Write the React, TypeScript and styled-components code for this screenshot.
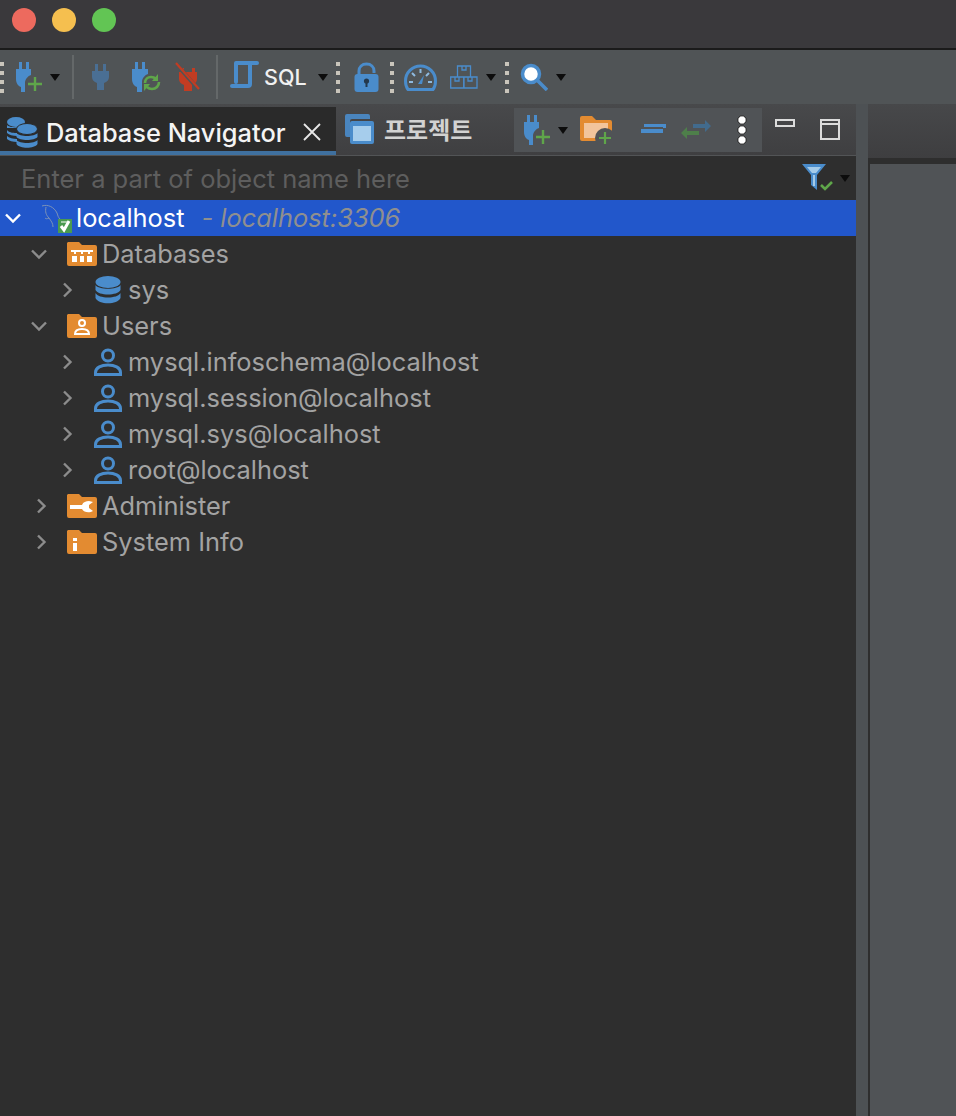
import React from "react";
import styled, { createGlobalStyle } from "styled-components";

const GlobalStyle = createGlobalStyle`
  html, body {
    margin: 0;
    padding: 0;
    background: #2e2e2e;
  }
  * {
    box-sizing: border-box;
  }
`;

const Window = styled.div`
  width: 956px;
  height: 1116px;
  display: flex;
  flex-direction: column;
  overflow: hidden;
  font-family: Inter, "Noto Sans CJK KR", sans-serif;
`;

const TitleBar = styled.div`
  height: 50px;
  flex: none;
  padding: 8px 0 0 12px;
  display: flex;
  gap: 16px;
  background: #3a393c;
  border-bottom: 2px solid #1b1b1b;
`;

const Light = styled.span<{ $color: string }>`
  width: 24px;
  height: 24px;
  border-radius: 50%;
  background: ${(p) => p.$color};
`;

const Toolbar = styled.div`
  height: 54px;
  flex: none;
  display: flex;
  align-items: center;
  background: #505456;
  color: #f0f0f0;
  font-size: 21.5px;
  font-weight: 500;
`;

const Slot = styled.div<{ $left: number }>`
  display: flex;
  align-items: center;
  flex: none;
  margin-left: ${(p) => p.$left}px;
`;

const Grip = styled.span`
  display: block;
  width: 4px;
  height: 31px;
  background: repeating-linear-gradient(#c9c5bb 0 4px, transparent 4px 9px);
`;

const Separator = styled.span`
  display: block;
  width: 2px;
  height: 44px;
  background: #646869;
`;

const Arrow = styled.span`
  display: block;
  flex: none;
  width: 0;
  height: 0;
  border-left: 5px solid transparent;
  border-right: 5px solid transparent;
  border-top: 7px solid #0c0c0c;
`;

const Workspace = styled.div`
  flex: 1;
  display: flex;
  min-height: 0;
`;

const NavigatorPanel = styled.section`
  width: 856px;
  flex: none;
  display: flex;
  flex-direction: column;
  background: #2e2e2e;
`;

const TabBar = styled.div`
  height: 52px;
  flex: none;
  display: flex;
  background: linear-gradient(#48494b, #3f3f41);
  border-bottom: 1px solid #525456;
`;

const ActiveTab = styled.div`
  width: 336px;
  flex: none;
  display: flex;
  align-items: center;
  margin-top: 3px;
  padding: 6px 0 0 7px;
  background: #2a2a2a;
  border-bottom: 4px solid #3f709f;
  color: #f4f4f4;
  font-size: 25.4px;
  font-weight: 500;
`;

const TabLabel = styled.span`
  margin-left: 8px;
  white-space: nowrap;
`;

const CloseIcon = styled.svg`
  margin-left: 16px;
  flex: none;
`;

const InactiveTab = styled.div`
  width: 178px;
  flex: none;
  display: flex;
  align-items: center;
  margin-top: 3px;
  padding: 0 0 5px 9px;
  color: #d2d2d2;
  font-size: 24px;
  font-weight: 700;
  font-family: "Noto Sans CJK KR", sans-serif;
`;

const ProjectLabel = styled.span`
  margin-left: 10px;
`;

const ViewBar = styled.div`
  width: 248px;
  height: 44px;
  margin-top: 4px;
  flex: none;
  display: flex;
  align-items: center;
  background: #505356;
`;

const WindowControls = styled.div`
  display: flex;
  align-items: flex-start;
  padding: 15px 0 0 13px;
  gap: 25px;
`;

const FilterRow = styled.div`
  height: 44px;
  flex: none;
  display: flex;
  align-items: center;
  padding: 0 6px 0 21px;
  font-size: 25.5px;
  color: #5e5e5e;
`;

const Placeholder = styled.span`
  flex: 1;
  white-space: nowrap;
`;

const Tree = styled.div`
  display: flex;
  flex-direction: column;
`;

const Row = styled.div<{ $level: number; $selected?: boolean }>`
  height: 36px;
  display: flex;
  align-items: center;
  padding: 0 0 2px ${(p) => 3 + p.$level * 26}px;
  background: ${(p) => (p.$selected ? "#2257cb" : "transparent")};
  color: ${(p) => (p.$selected ? "#ffffff" : "#a3a3a3")};
  font-size: 25.4px;
  white-space: nowrap;
`;

const Twisty = styled.span`
  width: 20px;
  flex: none;
  margin-top: 2px;
  display: flex;
  justify-content: center;
`;

const NodeIcon = styled.span`
  width: 53px;
  flex: none;
  margin-top: 2px;
  padding-left: 18px;
  display: flex;
  align-items: center;
`;

const Hint = styled.span`
  margin-left: 17px;
  color: #8f8f8f;
  font-style: italic;
`;

const Sash = styled.div`
  width: 12px;
  flex: none;
  background: #4d5154;
`;

const EditorArea = styled.section`
  flex: 1;
  display: flex;
  flex-direction: column;
`;

const EditorHeader = styled.div`
  height: 54px;
  flex: none;
  background: linear-gradient(#47484a, #3e3e40);
`;

const EditorBody = styled.div`
  flex: 1;
  background: #505356;
  border-top: 6px solid #2e2e2e;
  border-left: 2px solid #2e2e2e;
`;

const BLUE = "#4a8ccb";
const GREEN = "#5fa64a";
const ORANGE = "#e38b31";

const Chevron = ({ open, color }: { open?: boolean; color: string }) => (
  <svg width="16" height="16" viewBox="0 0 16 16">
    <path
      d={open ? "M1 4.500l7 7 7-7" : "M7 1.500l6.500 6.500-6.500 6.500"}
      fill="none"
      stroke={color}
      strokeWidth="2.4"
    />
  </svg>
);

const PlugAdd = () => (
  <svg width="28" height="31" viewBox="0 0 28 31">
    <path fill={BLUE} d="M3 0h3v7H3zM10 0h3v7h-3zM0 7h15v6c-3 1-6 4-6 8v9H5v-5c-3-1-5-4-5-8z" />
    <path stroke={GREEN} strokeWidth="2.4" d="M19 15v14M12 22h14" />
  </svg>
);

const Plug = () => (
  <svg width="17" height="26" viewBox="0 0 17 26">
    <path fill="#4a6f94" d="M3 0h3v7H3zM11 0h3v7h-3zM0 7h17v6c0 3-2 5-5 6v7H5v-7c-3-1-5-3-5-6z" />
  </svg>
);

const PlugRefresh = () => (
  <svg width="29" height="31" viewBox="0 0 29 31">
    <path fill={BLUE} d="M3 0h3v7H3zM10 0h3v7h-3zM0 7h16v5c-3 1-6 4-6 8v10H5v-5c-3-1-5-4-5-8z" />
    <path fill="none" stroke={GREEN} strokeWidth="2.6" d="M13 21c0-4 3-6 6-6 2 0 4 1 5 2M27 20c0 4-3 7-7 7-2 0-4-1-5-2" />
    <path fill={GREEN} d="M26 12v7h-6zM12 29v-7h6z" />
  </svg>
);

const PlugOff = () => (
  <svg width="26" height="30" viewBox="0 0 26 30">
    <path fill="#c23c22" d="M6 6h3v5H6zM17 6h3v5h-3zM4 10h18v7c0 3-2 5-5 6v6H9v-6c-3-1-5-3-5-6z" />
    <path stroke="#505456" strokeWidth="4" d="M2 3l22 25" />
    <path stroke="#c23c22" strokeWidth="2.2" d="M1 1l23 26" />
  </svg>
);

const SqlScript = () => (
  <svg width="31" height="32" viewBox="0 0 31 32">
    <path
      fill="none"
      stroke={BLUE}
      strokeWidth="4"
      strokeLinecap="round"
      d="M6 2h21M6 2v19M2 25h16c1.500 0 2-1 2-2V2"
    />
  </svg>
);

const Lock = () => (
  <svg width="25" height="30" viewBox="0 0 25 30">
    <path fill="none" stroke={BLUE} strokeWidth="3" d="M5 14V9c0-4 3-7 7.500-7S20 5 20 9v2" />
    <rect x="0.500" y="12" width="24" height="18" rx="3" fill={BLUE} />
    <circle cx="12.500" cy="19" r="2.600" fill="#24384c" />
    <path fill="#24384c" d="M11.500 20h2v5h-2z" />
  </svg>
);

const Gauge = () => (
  <svg width="33" height="27" viewBox="0 0 33 27">
    <path fill="none" stroke={BLUE} strokeWidth="3" d="M4 25.500C2 23 1.500 20 1.500 17a15 15 0 0 1 30 0c0 3-.5 6-2.500 8.500z" />
    <path stroke="#8eb9de" strokeWidth="2" d="M5 18h4M24 18h4M8 9l3 3M25 9l-3 3M16.500 5v4" />
    <path fill={BLUE} d="M20 11l-2 9h-4z" />
  </svg>
);

const Boxes = () => (
  <svg width="28" height="24" viewBox="0 0 28 24" fill="none" stroke={BLUE} strokeWidth="1.300">
    <path d="M7.500 1h13v11h-13zM12 1v4h4V1M.7 12h13v11H.7zM5 12v4h4v-4M14 12h13v11H14zM18 12v4h4v-4" />
  </svg>
);

const Search = () => (
  <svg width="28" height="28" viewBox="0 0 28 28">
    <path stroke={BLUE} strokeWidth="3.500" d="M17 17l10 10" />
    <circle cx="11" cy="11" r="8.500" fill="#ffffff" stroke={BLUE} strokeWidth="3.500" />
  </svg>
);

const DbStack = () => (
  <svg width="31" height="33" viewBox="0 0 31 33" fill={BLUE}>
    <ellipse cx="9" cy="6" rx="9" ry="5" />
    <path d="M0 9c2 3 15 3 18 0v3H0zM0 14c2 3 8 3 10 3v3c-4 0-8-1-10-3zM0 20c2 2 6 3 10 3v3c-4 0-8-1-10-3z" />
    <ellipse cx="20" cy="13" rx="10.500" ry="5.500" stroke="#2a2a2a" strokeWidth="1" />
    <path d="M9.500 17c3 4 18 4 21 0v4c-3 4-18 4-21 0zM9.500 24c3 4 18 4 21 0v4c-3 5-18 5-21 0z" />
  </svg>
);

const ProjectWindows = () => (
  <svg width="29" height="30" viewBox="0 0 29 30">
    <path fill={BLUE} d="M2 0h21a2 2 0 0 1 2 2v3H7a2 2 0 0 0-2 2v16H2a2 2 0 0 1-2-2V2a2 2 0 0 1 2-2z" opacity="0.9" />
    <rect x="5" y="7" width="24" height="23" rx="2" fill={BLUE} />
    <rect x="8" y="12" width="18" height="15" fill="#a6cdec" />
  </svg>
);

const FolderAdd = () => (
  <svg width="32" height="29" viewBox="0 0 32 29">
    <path fill={ORANGE} d="M2 0h10l4 4h14a2 2 0 0 1 2 2v19H2a2 2 0 0 1-2-2V2a2 2 0 0 1 2-2z" />
    <path fill="#f2c49b" d="M4 7h24v15H4z" />
    <circle cx="25" cy="22" r="10" fill="#505356" />
    <path stroke={GREEN} strokeWidth="2.200" d="M25 16v12M19 22h12" />
  </svg>
);

const CollapseAll = () => (
  <svg width="25" height="13" viewBox="0 0 25 13">
    <path fill={BLUE} d="M3 0h22v4h-3v-1H3zM0 5h22v4H0z" />
  </svg>
);

const LinkArrows = () => (
  <svg width="30" height="20" viewBox="0 0 30 20">
    <path fill="#406e94" d="M12 4h12V0l6 6-6 6V8H12z" opacity="0.9" />
    <path fill="#4e7f4a" d="M18 11H6V7l-6 6 6 6v-4h12z" />
  </svg>
);

const MoreDots = () => (
  <svg width="12" height="30" viewBox="0 0 12 30">
    {[5, 15, 25].map((cy) => (
      <circle key={cy} cx="6" cy={cy} r="4.200" fill="#ffffff" stroke="#202020" strokeWidth="1" />
    ))}
  </svg>
);

const Minimize = () => (
  <svg width="20" height="9" viewBox="0 0 20 9">
    <rect x="1" y="1" width="18" height="6" fill="none" stroke="#dcdcdc" strokeWidth="2" />
  </svg>
);

const Maximize = () => (
  <svg width="20" height="21" viewBox="0 0 20 21">
    <path d="M1 1h18v19H1zM1 5h18" fill="none" stroke="#dcdcdc" strokeWidth="2" />
  </svg>
);

const Funnel = () => (
  <svg width="31" height="28" viewBox="0 0 31 28">
    <path fill={BLUE} d="M0 0h24l-9 11v15l-6-5V11z" />
    <path fill="#a5cbe9" d="M5 3h14l-5 6h-4zM11 11h2v11h-2z" />
    <path fill="none" stroke={GREEN} strokeWidth="2.600" d="M19 21l4 4 7-7" />
  </svg>
);

const Dolphin = () => (
  <svg width="31" height="30" viewBox="0 0 31 30">
    <path
      fill="none"
      stroke="#7d93b8"
      strokeWidth="1"
      d="M1 3c6-2 12 1 15 7 1 3 1 4 3 6M5 4c-1 5 0 8 3 11 2 3 4 5 4 9M8 15c-2 1-3 1-4 0"
    />
    <rect x="17" y="16" width="14" height="14" fill="#4a9a50" />
    <path fill="none" stroke="#ffffff" strokeWidth="3" d="M20 23l3 4 5-9" />
    <path fill="#ffffff" d="M20 18h6v2h-6z" opacity="0.5" />
  </svg>
);

const FolderShape = ({ children }: { children: React.ReactNode }) => (
  <svg width="30" height="24" viewBox="0 0 30 24">
    <path fill={ORANGE} d="M1 0h11l3 3h13a2 2 0 0 1 2 2v17a2 2 0 0 1-2 2H2a2 2 0 0 1-2-2V1z" />
    {children}
  </svg>
);

const DatabasesFolder = () => (
  <FolderShape>
    <path fill="none" stroke="#ffffff" strokeWidth="2" d="M4 9h22M8 9v3M15 9v3M22 9v3" />
    <path fill="#ffffff" d="M5 14h5v6H5zM13 14h4v6h-4zM20 14h5v6h-5z" />
  </FolderShape>
);

const UsersFolder = () => (
  <FolderShape>
    <circle cx="15" cy="9" r="3" fill="none" stroke="#ffffff" strokeWidth="2" />
    <path fill="none" stroke="#ffffff" strokeWidth="2" d="M8 20c0-4 3-5 7-5s7 1 7 5z" />
  </FolderShape>
);

const AdministerFolder = () => (
  <FolderShape>
    <path fill="#ffffff" d="M3 11h12c1-3 4-4 7-4l4 1-4 3v3l4 3c-3 2-9 2-11-2H3z" />
  </FolderShape>
);

const InfoFolder = () => (
  <FolderShape>
    <path fill="#ffffff" d="M6 8h4v3H6zM6 13h4v8H6z" />
  </FolderShape>
);

const Database = () => (
  <svg width="29" height="28" viewBox="-2 0 29 28" fill={BLUE}>
    <ellipse cx="13" cy="6" rx="12.500" ry="6" />
    <path d="M.5 9c3 5 22 5 25 0v5c-3 6-22 6-25 0zM.5 17c3 6 22 6 25 0v5c-3 7-22 7-25 0z" />
  </svg>
);

const Person = () => (
  <svg width="29" height="28" viewBox="-1 0 29 28" fill="none" stroke={BLUE} strokeWidth="3">
    <circle cx="14" cy="7.500" r="5.500" />
    <path d="M1.500 26.500v-2c0-5 6-7.500 12.500-7.500s12.500 2.500 12.500 7.500v2z" />
  </svg>
);

const users = [
  "mysql.infoschema@localhost",
  "mysql.session@localhost",
  "mysql.sys@localhost",
  "root@localhost",
];

export default function App() {
  return (
    <Window>
      <GlobalStyle />
      <TitleBar>
        <Light $color="#ed6a5e" />
        <Light $color="#f5bf4f" />
        <Light $color="#62c554" />
      </TitleBar>

      <Toolbar>
        <Slot $left={0}><Grip /></Slot>
        <Slot $left={12}><PlugAdd /></Slot>
        <Slot $left={6}><Arrow /></Slot>
        <Slot $left={12}><Separator /></Slot>
        <Slot $left={18}><Plug /></Slot>
        <Slot $left={23}><PlugRefresh /></Slot>
        <Slot $left={14}><PlugOff /></Slot>
        <Slot $left={15}><Separator /></Slot>
        <Slot $left={12}><SqlScript /></Slot>
        <Slot $left={3}>SQL</Slot>
        <Slot $left={11}><Arrow /></Slot>
        <Slot $left={8}><Grip /></Slot>
        <Slot $left={14}><Lock /></Slot>
        <Slot $left={11}><Grip /></Slot>
        <Slot $left={10}><Gauge /></Slot>
        <Slot $left={13}><Boxes /></Slot>
        <Slot $left={8}><Arrow /></Slot>
        <Slot $left={9}><Grip /></Slot>
        <Slot $left={11}><Search /></Slot>
        <Slot $left={8}><Arrow /></Slot>
      </Toolbar>

      <Workspace>
        <NavigatorPanel>
          <TabBar>
            <ActiveTab>
              <DbStack />
              <TabLabel>Database Navigator</TabLabel>
              <CloseIcon width="20" height="20" viewBox="0 0 20 20">
                <path d="M2 2l16 16M18 2L2 18" stroke="#e8e8e8" strokeWidth="1.800" />
              </CloseIcon>
            </ActiveTab>
            <InactiveTab>
              <ProjectWindows />
              <ProjectLabel>프로젝트</ProjectLabel>
            </InactiveTab>
            <ViewBar>
              <Slot $left={10}><PlugAdd /></Slot>
              <Slot $left={6}><Arrow /></Slot>
              <Slot $left={12}><FolderAdd /></Slot>
              <Slot $left={29}><CollapseAll /></Slot>
              <Slot $left={15}><LinkArrows /></Slot>
              <Slot $left={25}><MoreDots /></Slot>
            </ViewBar>
            <WindowControls>
              <Minimize />
              <Maximize />
            </WindowControls>
          </TabBar>

          <FilterRow>
            <Placeholder>Enter a part of object name here</Placeholder>
            <Funnel />
            <Slot $left={7}><Arrow /></Slot>
          </FilterRow>

          <Tree>
            <Row $level={0} $selected>
              <Twisty><Chevron open color="#ffffff" /></Twisty>
              <NodeIcon><Dolphin /></NodeIcon>
              localhost
              <Hint>- localhost:3306</Hint>
            </Row>
            <Row $level={1}>
              <Twisty><Chevron open color="#8c8c8c" /></Twisty>
              <NodeIcon><DatabasesFolder /></NodeIcon>
              Databases
            </Row>
            <Row $level={2}>
              <Twisty><Chevron color="#8c8c8c" /></Twisty>
              <NodeIcon><Database /></NodeIcon>
              sys
            </Row>
            <Row $level={1}>
              <Twisty><Chevron open color="#8c8c8c" /></Twisty>
              <NodeIcon><UsersFolder /></NodeIcon>
              Users
            </Row>
            {users.map((u) => (
              <Row $level={2} key={u}>
                <Twisty><Chevron color="#8c8c8c" /></Twisty>
                <NodeIcon><Person /></NodeIcon>
                {u}
              </Row>
            ))}
            <Row $level={1}>
              <Twisty><Chevron color="#8c8c8c" /></Twisty>
              <NodeIcon><AdministerFolder /></NodeIcon>
              Administer
            </Row>
            <Row $level={1}>
              <Twisty><Chevron color="#8c8c8c" /></Twisty>
              <NodeIcon><InfoFolder /></NodeIcon>
              System Info
            </Row>
          </Tree>
        </NavigatorPanel>
        <Sash />
        <EditorArea>
          <EditorHeader />
          <EditorBody />
        </EditorArea>
      </Workspace>
    </Window>
  );
}
